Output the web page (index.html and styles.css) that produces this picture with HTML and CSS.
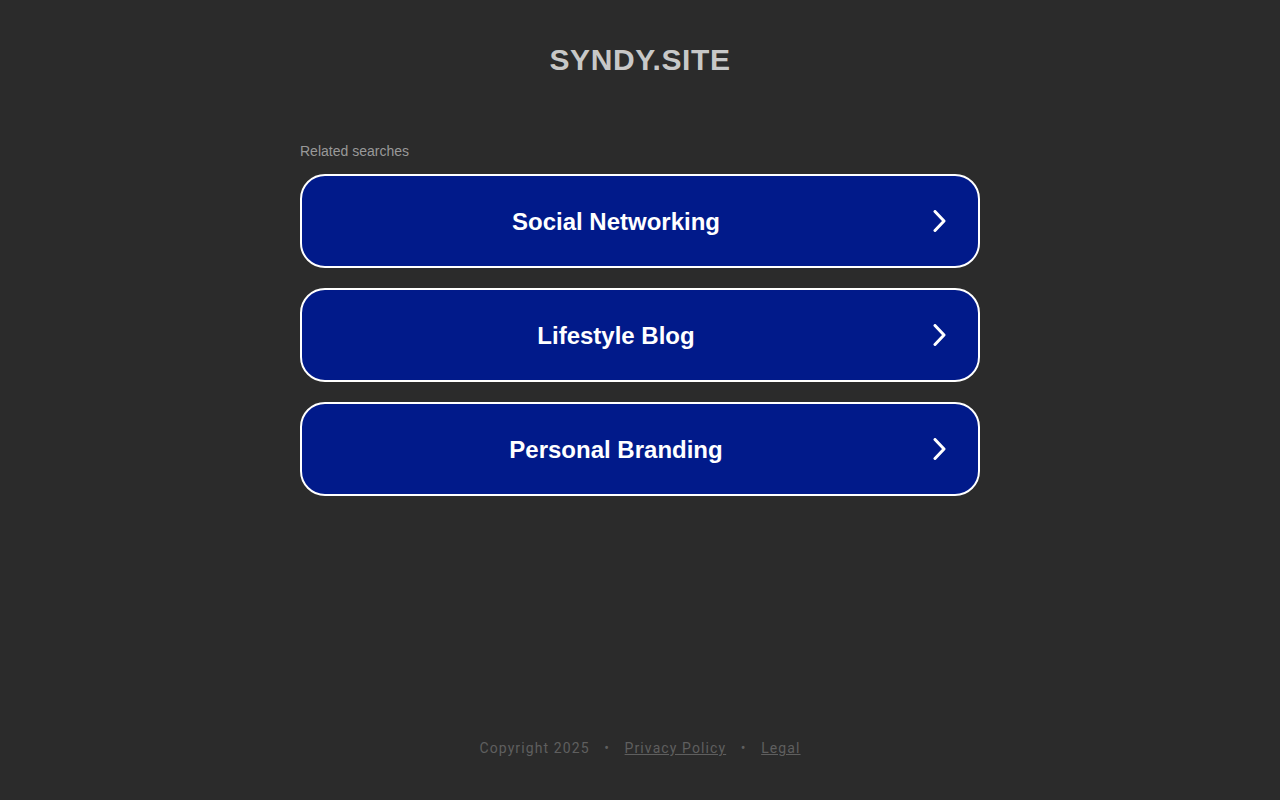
FILE: index.html
```html
<!DOCTYPE html>
<html lang="en">
<head>
  <meta charset="UTF-8">
  <title>syndy.site</title>
  <link rel="stylesheet" href="styles.css">
</head>
<body>
  <div class="header">SYNDY.SITE</div>

  <div class="main">
    <p class="label">Related searches</p>
    <a class="item" href="#">
      <span class="item-text">Social Networking</span>
      <svg class="arrow" width="17" height="22" viewBox="0 0 17 22"><path d="M5 1.5 L14 11 L5 20.5" fill="none" stroke="#fff" stroke-width="3" stroke-linecap="round" stroke-linejoin="round"/></svg>
    </a>
    <a class="item" href="#">
      <span class="item-text">Lifestyle Blog</span>
      <svg class="arrow" width="17" height="22" viewBox="0 0 17 22"><path d="M5 1.5 L14 11 L5 20.5" fill="none" stroke="#fff" stroke-width="3" stroke-linecap="round" stroke-linejoin="round"/></svg>
    </a>
    <a class="item" href="#">
      <span class="item-text">Personal Branding</span>
      <svg class="arrow" width="17" height="22" viewBox="0 0 17 22"><path d="M5 1.5 L14 11 L5 20.5" fill="none" stroke="#fff" stroke-width="3" stroke-linecap="round" stroke-linejoin="round"/></svg>
    </a>
  </div>

  <div class="footer">
    <span>Copyright 2025</span>
    <span class="dot">&bull;</span>
    <a href="#">Privacy Policy</a>
    <span class="dot">&bull;</span>
    <a href="#">Legal</a>
  </div>
</body>
</html>
```

FILE: styles.css
```css
*{
  margin: 0;
  padding: 0;
  box-sizing: border-box;
}
html, body{
  height: 100%;
}
body{
  background: #2b2b2b;
  font-family: "Liberation Sans", Arial, sans-serif;
  display: flex;
  flex-direction: column;
  align-items: center;
}

.header{
  padding-top: 42px;
  height: 140px;
  font-size: 30px;
  font-weight: bold;
  letter-spacing: 0.6px;
  color: #c8c8c8;
  line-height: 36px;
}

.main{
  width: 680px;
}
.label{
  font-size: 14px;
  color: #999;
  line-height: 22px;
  margin-bottom: 12px;
}
.item{
  display: flex;
  align-items: center;
  height: 94px;
  margin-bottom: 20px;
  background: #011a8a;
  border: 2px solid #fff;
  border-radius: 25px;
  text-decoration: none;
  padding-right: 31px;
}
.item-text{
  flex: 1;
  text-align: center;
  font-size: 24px;
  font-weight: bold;
  color: #fff;
  padding-top: 2px;
}
.arrow{
  display: block;
}

.footer{
  margin-top: auto;
  padding-bottom: 42px;
  font-family: Roboto, "Liberation Sans", sans-serif;
  font-size: 14px;
  letter-spacing: 1.1px;
  color: #5f5f5f;
  line-height: 20px;
}
.footer a{
  color: #5f5f5f;
}
.dot{
  margin: 0 10px;
}
```
